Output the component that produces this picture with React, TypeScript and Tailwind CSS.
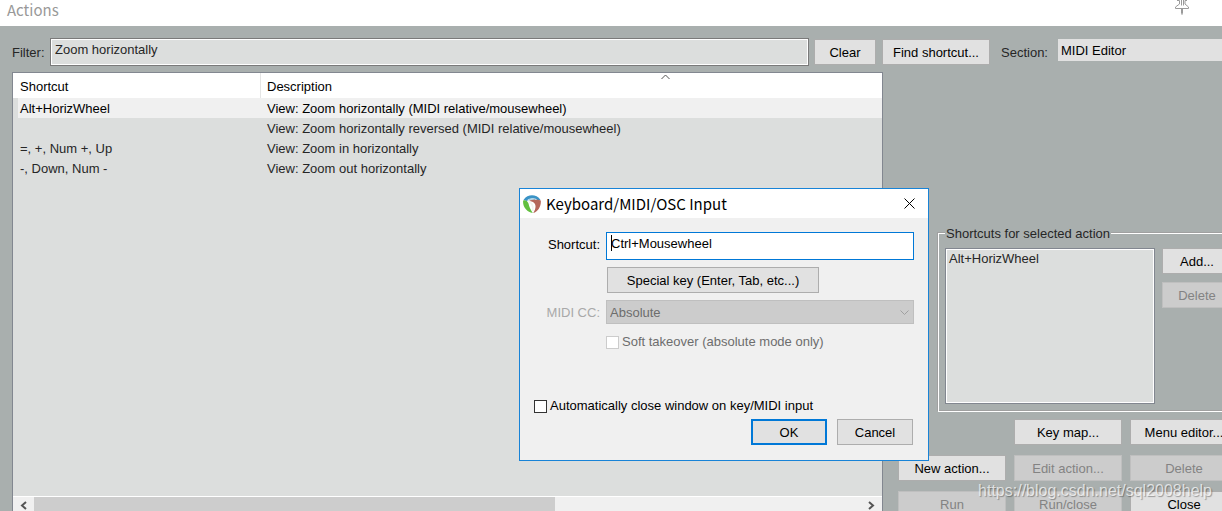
import type { ButtonHTMLAttributes } from "react";
import clsx from "clsx";

const actions = [
  { shortcut: "Alt+HorizWheel", description: "View: Zoom horizontally (MIDI relative/mousewheel)" },
  { shortcut: "", description: "View: Zoom horizontally reversed (MIDI relative/mousewheel)" },
  { shortcut: "=, +, Num +, Up", description: "View: Zoom in horizontally" },
  { shortcut: "-, Down, Num -", description: "View: Zoom out horizontally" },
];

const Button = ({ className, ...props }: ButtonHTMLAttributes<HTMLButtonElement>) => (
  <button
    type="button"
    className={clsx(
      "h-[26px] shrink-0 whitespace-nowrap border border-[#adadad] bg-[#e1e1e1] pt-[2px] text-black",
      "disabled:border-[#bfbfbf] disabled:bg-[#cccccc] disabled:text-[#838383]",
      className
    )}
    {...props}
  />
);

const PinIcon = () => (
  <svg className="h-4 w-4" viewBox="0 0 16 16" fill="none" stroke="#9a9a9a">
    <path d="M3 .5h2.500v3.500L1.500 7v1.500h13V7l-3.500-3V.5H13M7.500 0v5.500M9.500 0v5.500M7.500 8.500v5l.5 1 .5-1v-5" />
  </svg>
);

const ReaperIcon = () => (
  <svg className="h-[18px] w-[18px]" viewBox="0 0 18 18">
    <path d="M.5 5C2.500 1.500 6 .2 9 .2s6.500 1.300 8.500 4.800L14 6C11 4 7 4 4 6z" fill="#3a93c6" />
    <path d="M.2 5.500C2 4.500 4.500 5.500 5.500 8.500 6.200 12 7.500 14.500 9.800 18 4 17.500-.8 11.500.2 5.500z" fill="#62bf3f" />
    <path d="M6 6C9 4.500 14 4 17.800 5.500 18.300 11.500 15 16.500 10.200 18c2.300-3.500 3-7 1.600-9.300C10.500 7 8.500 6.300 6 6z" fill="#b5665a" />
    <path d="M4.500 5.200C7.500 3.400 10.500 3.300 13.500 4.500" fill="none" stroke="#d9edf5" />
    <path d="M5.500 6.800c3 .5 4.800 4 4.300 9.200" fill="none" stroke="#f4f4f0" strokeWidth="1.700" />
  </svg>
);

const Toolbar = () => (
  <div className="flex h-7 shrink-0 items-center">
    <label htmlFor="filter" className="w-[38px] shrink-0 pt-[2px]">
      Filter:
    </label>
    <input
      id="filter"
      defaultValue="Zoom horizontally"
      className="h-7 min-w-0 flex-1 border border-[#7a7a7a] bg-[#dcdedd] px-1 pb-[6px] shadow-[inset_0_0_0_1px_#fff] outline-none"
    />
    <Button className="ml-[5px] w-[62px]">Clear</Button>
    <Button className="ml-[6px] w-[108px]">Find shortcut...</Button>
    <label htmlFor="section" className="ml-[11px] w-[57px] shrink-0 pt-[2px]">
      Section:
    </label>
    <select
      id="section"
      className="mb-1 h-[22px] w-[164px] shrink-0 appearance-none bg-[#e1e1e1] px-[3px] pt-[2px] text-black outline-none"
    >
      <option>MIDI Editor</option>
    </select>
  </div>
);

const ActionList = () => (
  <div className="flex min-w-0 flex-1 flex-col overflow-hidden border border-b-0 border-[#828790] bg-[#dcdedd]">
    <table className="w-full table-fixed border-separate border-spacing-0 text-left">
      <thead className="bg-white text-black">
        <tr className="h-[25px]">
          <th className="w-[248px] border-r border-[#e5e5e5] px-[7px] pt-[2px] font-normal">Shortcut</th>
          <th className="relative px-[6px] pt-[2px] font-normal">
            Description
            <svg className="absolute left-[400px] top-px h-[6px] w-[9px]" viewBox="0 0 9 6" fill="none" stroke="#555">
              <path d="M.5 5l4-4 4 4" />
            </svg>
          </th>
        </tr>
      </thead>
      <tbody>
        {actions.map((action, i) => (
          <tr key={action.description} className={clsx(i === 0 && "text-black")}>
            <td className="pl-[5px]">
              <div className={clsx("h-5 pl-[2px] pt-px", i === 0 && "bg-[#f0f0f0]")}>{action.shortcut}</div>
            </td>
            <td>
              <div className={clsx("h-5 pl-[6px] pt-px", i === 0 && "bg-[#f0f0f0]")}>{action.description}</div>
            </td>
          </tr>
        ))}
      </tbody>
    </table>

    {/* horizontal scrollbar */}
    <div className="mt-auto flex h-[15px] shrink-0 border-t border-white bg-[#f0f0f0]">
      <button type="button" aria-label="Scroll left" className="flex w-[21px] justify-center pt-1">
        <svg className="h-[9px] w-[7px]" viewBox="0 0 7 9" fill="none" stroke="#555" strokeWidth="2">
          <path d="M6 1L2 4.500 6 8" />
        </svg>
      </button>
      <div className="flex-1">
        <div className="h-full w-[63%] bg-[#cdcdcd]" />
      </div>
      <button type="button" aria-label="Scroll right" className="flex w-[21px] justify-center pt-1">
        <svg className="h-[9px] w-[7px]" viewBox="0 0 7 9" fill="none" stroke="#555" strokeWidth="2">
          <path d="M1 1l4 3.500L1 8" />
        </svg>
      </button>
    </div>
  </div>
);

const SidePanel = () => (
  <div className="w-[339px] shrink-0 overflow-hidden pl-[15px] pt-[152px]">
    <fieldset className="ml-10 h-[188px] w-[300px] border border-white px-[6px] shadow-[-1px_-1px_0_#a0a0a0,inset_0_-1px_0_#a0a0a0]">
      <legend className="bg-[#a9afae] px-px pt-[2px] leading-4">Shortcuts for selected action</legend>
      <div className="flex pt-[6px]">
        <ul className="h-[156px] w-[210px] border border-[#828790] bg-[#dcdedd] px-[3px] pt-[2px] shadow-[inset_0_0_0_1px_#fff]">
          <li className="leading-4">Alt+HorizWheel</li>
        </ul>
        <div className="ml-[7px] flex flex-col gap-2">
          <Button className="w-[70px]">Add...</Button>
          <Button className="w-[70px]" disabled>
            Delete
          </Button>
        </div>
      </div>
    </fieldset>

    <div className="mt-[7px] grid w-[340px] grid-cols-3 gap-x-2 gap-y-[10px]">
      <Button className="col-start-2">Key map...</Button>
      <Button>Menu editor...</Button>
      <Button>New action...</Button>
      <Button disabled>Edit action...</Button>
      <Button disabled>Delete</Button>
      <Button disabled>Run</Button>
      <Button disabled>Run/close</Button>
      <Button>Close</Button>
    </div>
  </div>
);

const InputDialog = () => (
  <div
    role="dialog"
    aria-labelledby="dialog-title"
    className="absolute left-[519px] top-[188px] w-[410px] border border-[#1883d7] bg-[#f0f0f0] text-black"
  >
    <div className="flex h-[29px] items-center bg-white pl-[3px] pr-[13px]">
      <ReaperIcon />
      <h2 id="dialog-title" className="ml-[5px] flex-1 font-['Noto_Sans_CJK_SC',sans-serif] text-[15px] leading-5">
        Keyboard/MIDI/OSC Input
      </h2>
      <button type="button" aria-label="Close">
        <svg className="h-[11px] w-[11px]" viewBox="0 0 11 11" fill="none" stroke="#000">
          <path d="M.5.5l10 10M10.500.5l-10 10" />
        </svg>
      </button>
    </div>

    <div className="grid grid-cols-[80px_1fr] gap-x-[6px] gap-y-[7px] pr-[14px] pt-[14px]">
      <label htmlFor="shortcut" className="pt-[3px] text-right">
        Shortcut:
      </label>
      <div className="relative">
        <input
          id="shortcut"
          defaultValue="Ctrl+Mousewheel"
          className="block h-7 w-full border border-[#0078d7] bg-white px-1 pb-[6px] outline-none"
        />
        <span className="absolute left-[5px] top-[3px] h-4 w-px bg-black" />
      </div>
      <Button className="col-start-2 ml-px w-[212px]">Special key (Enter, Tab, etc...)</Button>
      <label htmlFor="midi-cc" className="self-center pt-[2px] text-right text-[#a9a9a9]">
        MIDI CC:
      </label>
      <div className="relative">
        <select
          id="midi-cc"
          disabled
          className="block h-6 w-full appearance-none border border-[#bfbfbf] bg-[#cccccc] px-[3px] pt-[2px] text-[#6d6d6d] opacity-100"
        >
          <option>Absolute</option>
        </select>
        <svg
          className="pointer-events-none absolute right-[5px] top-[10px] h-[6px] w-[9px]"
          viewBox="0 0 9 6"
          fill="none"
          stroke="#a0a0a0"
        >
          <path d="M.5.5l4 4 4-4" />
        </svg>
      </div>
      <label className="col-start-2 flex h-[22px] items-center gap-[3px] text-[#6d6d6d]">
        <input type="checkbox" disabled className="h-[13px] w-[13px] appearance-none border border-[#cccccc] bg-white" />
        Soft takeover (absolute mode only)
      </label>
    </div>

    <label className="ml-[14px] mt-[42px] flex h-[22px] w-fit items-center gap-[3px]">
      <input type="checkbox" className="h-[13px] w-[13px] appearance-none border border-[#333333] bg-white" />
      Automatically close window on key/MIDI input
    </label>
    <div className="flex justify-end gap-[10px] pb-[15px] pr-[15px] pt-[2px]">
      <Button className="w-[76px] outline-2 -outline-offset-2 outline-[#0078d7]">OK</Button>
      <Button className="w-[76px]">Cancel</Button>
    </div>
  </div>
);

const App = () => {
  return (
    <div className="relative flex h-screen flex-col overflow-hidden bg-[#a9afae] font-['Liberation_Sans',Arial,sans-serif] text-[13px] leading-5 text-[#262626]">
      <header className="flex h-[26px] shrink-0 justify-between bg-white pl-[7px] pr-8">
        <h1 className="font-['Noto_Sans_CJK_SC',sans-serif] text-[15px] leading-5 text-[#999999]">Actions</h1>
        <PinIcon />
      </header>

      <main className="flex min-h-0 flex-1 flex-col gap-[6px] pl-3 pt-3">
        <Toolbar />
        <div className="flex min-h-0 flex-1">
          <ActionList />
          <SidePanel />
        </div>
      </main>

      <InputDialog />

      {/* watermark */}
      <span className="pointer-events-none absolute bottom-2 right-[10px] text-base text-white/70 [text-shadow:1px_1px_1px_#0005]">
        https://blog.csdn.net/sql2008help
      </span>
    </div>
  );
};

export default App;
